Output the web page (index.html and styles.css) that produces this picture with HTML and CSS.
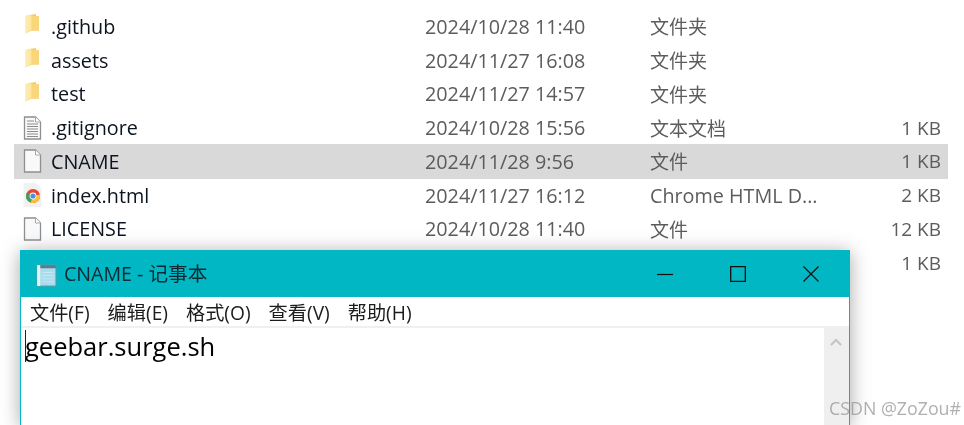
FILE: index.html
```html
<!DOCTYPE html>
<html lang="zh">
<head>
<meta charset="utf-8">
<title>CNAME</title>
<link rel="stylesheet" href="styles.css">
</head>
<body>
<svg class="defs" width="0" height="0" aria-hidden="true">
  <defs>
    <linearGradient id="fold" x1="0" y1="0" x2="1" y2="0">
      <stop offset="0" stop-color="#fff0b0"/><stop offset=".45" stop-color="#fbdc84"/><stop offset="1" stop-color="#f7d06c"/>
    </linearGradient>
    <symbol id="folder" viewBox="0 0 18 24">
      <path d="M4 1.500 L12.500 0 V3 H15.500 V16.500 H4 Z" fill="#f3ca66"/>
      <path d="M1.500 2 L8 .5 V16.500 L1.500 20 Z" fill="url(#fold)"/>
      <path d="M8 2 H15.500 V16.500 H6 L8 14 Z" fill="#f9d67a"/>
      <path d="M1.500 2 L8 .5 V15.500 L1.500 20 Z" fill="#fff2c0" opacity=".6"/>
    </symbol>
    <symbol id="blank" viewBox="0 0 18 24">
      <path d="M1 1 H12 L17 6 V23 H1 Z" fill="#f8f9fa" stroke="#8f8f8f" stroke-width="1.300"/>
      <path d="M12 1 V6 H17" fill="#fff" stroke="#a8a8a8" stroke-width="1"/>
    </symbol>
    <symbol id="text" viewBox="0 0 18 24">
      <path d="M1 1 H12 L17 6 V23 H1 Z" fill="#f8f9fa" stroke="#8f8f8f" stroke-width="1.300"/>
      <path d="M12 1 V6 H17" fill="#fff" stroke="#a8a8a8" stroke-width="1"/>
      <path d="M3.500 5h7M3.500 8h11M3.500 10.500h11M3.500 13h11M3.500 15.500h11M3.500 18h11M3.500 20.500h11" stroke="#8b8b8b" stroke-width="1" fill="none"/>
    </symbol>
    <symbol id="chrome" viewBox="0 0 18 24">
      <path d="M0 0 H12 L18 6 V24 H0 Z" fill="#f1f1f1"/>
      <circle cx="9.500" cy="13" r="7" fill="#e8453c"/>
      <path d="M9.500 13 L16.300 11.500 A7 7 0 0 1 7 19.600 Z" fill="#fbc02d"/>
      <path d="M9.500 13 L7 19.600 A7 7 0 0 1 3.200 10 Z" fill="#3da35a"/>
      <circle cx="9.500" cy="13" r="3.400" fill="#fff"/>
      <circle cx="9.500" cy="13" r="2.600" fill="#4a8fe0"/>
    </symbol>
  </defs>
</svg>

<main class="list">
  <div class="row"><svg class="icon"><use href="#folder"/></svg><span class="name">.github</span><span class="date">2024/10/28 11:40</span><span class="type cjk">文件夹</span><span class="size"></span></div>
  <div class="row"><svg class="icon"><use href="#folder"/></svg><span class="name">assets</span><span class="date">2024/11/27 16:08</span><span class="type cjk">文件夹</span><span class="size"></span></div>
  <div class="row"><svg class="icon"><use href="#folder"/></svg><span class="name">test</span><span class="date">2024/11/27 14:57</span><span class="type cjk">文件夹</span><span class="size"></span></div>
  <div class="row"><svg class="icon"><use href="#text"/></svg><span class="name">.gitignore</span><span class="date">2024/10/28 15:56</span><span class="type cjk">文本文档</span><span class="size">1 KB</span></div>
  <div class="row selected"><svg class="icon"><use href="#blank"/></svg><span class="name">CNAME</span><span class="date">2024/11/28 9:56</span><span class="type cjk">文件</span><span class="size">1 KB</span></div>
  <div class="row"><svg class="icon"><use href="#chrome"/></svg><span class="name">index.html</span><span class="date">2024/11/27 16:12</span><span class="type">Chrome HTML D...</span><span class="size">2 KB</span></div>
  <div class="row"><svg class="icon"><use href="#blank"/></svg><span class="name">LICENSE</span><span class="date">2024/10/28 11:40</span><span class="type cjk">文件</span><span class="size">12 KB</span></div>
  <div class="row"><span class="icon"></span><span class="name"></span><span class="date"></span><span class="type"></span><span class="size">1 KB</span></div>
</main>

<section class="window">
  <header class="titlebar">
    <svg class="np-icon" viewBox="0 0 24 24" aria-hidden="true">
      <path d="M3 3 H21 V23 H3 Z" fill="#a9dcec" stroke="#7f8f99" stroke-width=".8"/>
      <path d="M3 3 H21 V6 H3 Z" fill="#5b7c8f"/>
      <path d="M6 3 V23 H3 V3 Z" fill="#dff3f8"/>
      <path d="M8 10h11M8 13h11M8 16h11M8 19h11" stroke="#c4e8f2" stroke-width="1"/>
    </svg>
    <span class="title">CNAME - 记事本</span>
    <div class="controls">
      <svg class="ctl" viewBox="0 0 16 16"><path d="M0 8.500H16" stroke="#111" stroke-width="1.200"/></svg>
      <svg class="ctl" viewBox="0 0 16 16"><path d="M.7 .7H15.300V15.300H.7Z" stroke="#111" stroke-width="1.300" fill="none"/></svg>
      <svg class="ctl" viewBox="0 0 16 16"><path d="M.5 .5L15.500 15.500M15.500 .5L.5 15.500" stroke="#111" stroke-width="1.200"/></svg>
    </div>
  </header>
  <nav class="menubar">
    <span>文件(F)</span><span>编辑(E)</span><span>格式(O)</span><span>查看(V)</span><span>帮助(H)</span>
  </nav>
  <div class="editor">
    <div class="textarea"><span class="caret"></span>geebar.surge.sh</div>
    <div class="scrollbar">
      <svg class="arrow" viewBox="0 0 12 8"><path d="M1 7L6 2L11 7" stroke="#c4c4c4" stroke-width="2" fill="none"/></svg>
    </div>
  </div>
</section>

<div class="watermark">CSDN @ZoZou#</div>
</body>
</html>
```
FILE: styles.css
```css
* { box-sizing: border-box; }
html, body { margin: 0; height: 100%; overflow: hidden; background: #fff; }
body {
  width: 964px;
  height: 425px;
  position: relative;
  font-family: "Open Sans", "Noto Sans", "Noto Sans CJK SC", sans-serif;
  color: #1c1c1c;
  filter: blur(.35px);
}
.defs { position: absolute; }

.list {
  width: 934px;
  margin-left: 14px;
  padding-top: 9.4px;
}
.row {
  display: grid;
  grid-template-columns: 37px 374px 225px 1fr 60px;
  align-items: center;
  height: 33.75px;
  font-size: 19.75px;
  padding-right: 7px;
}
.row.selected { background: #d9d9d9; box-shadow: 0 1px 0 #d9d9d9; }
.icon { display: block; width: 19px; height: 24px; margin-left: 9px; }
.name { color: #0c1420; white-space: nowrap; }
.date, .type { color: #5c5c5c; white-space: nowrap; }
.type.cjk { font-size: 19px; }
.size { font-size: 19px; color: #5c5c5c; text-align: right; white-space: nowrap; }

.window {
  position: absolute;
  left: 20px;
  top: 250px;
  width: 830px;
  height: 175px;
  background: #fff;
  border: 1px solid #00b7c3;
  border-bottom: 0;
  box-shadow: 0 2px 18px rgba(0, 0, 0, .35);
  display: flex;
  flex-direction: column;
}
.titlebar {
  flex: none;
  height: 46px;
  background: #00b7c3;
  display: flex;
  align-items: center;
  padding-left: 13px;
}
.np-icon { width: 25px; height: 25px; margin-right: 5px; }
.title { font-size: 19.6px; color: #0b2a33; white-space: nowrap; padding-bottom: 3px; }
.controls { margin-left: auto; display: flex; align-items: center; gap: 57px; padding-right: 30px; }
.ctl { width: 16px; height: 16px; display: block; }

.menubar {
  flex: none;
  height: 31px;
  display: flex;
  align-items: center;
  gap: 18px;
  padding-left: 9px;
  font-size: 19.2px;
  color: #1c1c1c;
  border-bottom: 2px solid #f0f0f0;
}
.editor { flex: 1; display: flex; min-height: 0; }
.textarea {
  flex: 1;
  position: relative;
  font-size: 25.5px;
  line-height: 32px;
  color: #000;
  padding-left: 4px;
  padding-top: 2px;
}
.caret {
  position: absolute;
  left: 4px;
  top: 2px;
  width: 1px;
  height: 32px;
  background: #222;
}
.scrollbar { flex: none; width: 25px; background: #efefef; padding-top: 10px; }
.arrow { display: block; width: 12px; height: 8px; margin-left: 6px; }

.watermark {
  position: absolute;
  right: 3px;
  top: 396px;
  font-size: 17.8px;
  color: rgba(150, 150, 150, .75);
  white-space: nowrap;
}
```
